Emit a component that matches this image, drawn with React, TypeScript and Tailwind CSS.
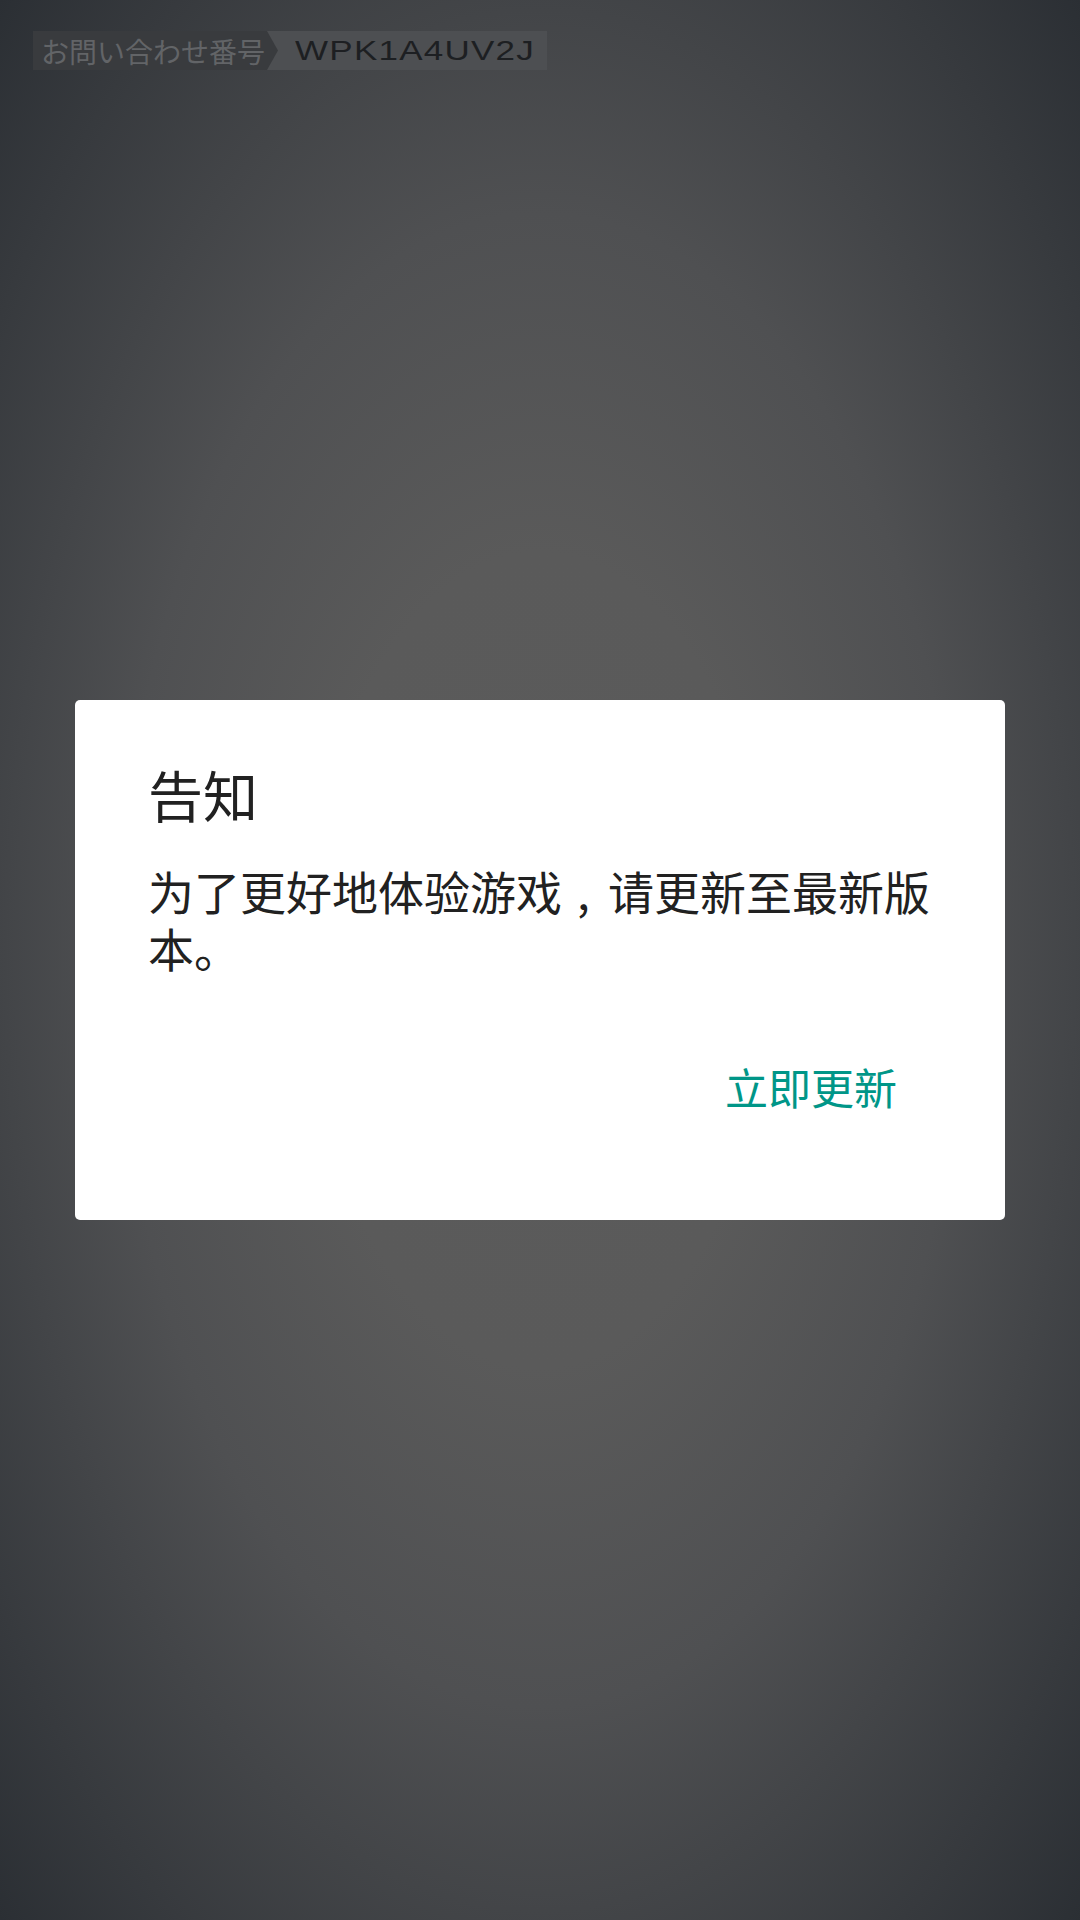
export default function App() {
	return (
		<div className="relative min-h-[1920px] w-[1080px] overflow-hidden bg-[radial-gradient(ellipse_at_center,#5b5b5b_0%,#5a5a5a_30%,#4f5052_55%,#2b2f34_100%)] font-['Noto_Sans_CJK_SC',sans-serif]">
			{/* inquiry number tag */}
			<div className="flex pl-[33px] pt-[31px]">
				<div className="relative z-10 flex h-[39px] w-[245px] items-center bg-[#393b3e] pl-[8px] [clip-path:polygon(0_0,calc(100%-11px)_0,100%_50%,calc(100%-11px)_100%,0_100%)]">
					<span className="font-['Noto_Sans_CJK_JP',sans-serif] text-[28px] leading-none text-[#626467]">
						お問い合わせ番号
					</span>
				</div>
				<div className="-ml-[11px] flex h-[39px] w-[280px] items-center bg-[#4d4f52] pl-[28px]">
					<span className="inline-block origin-left scale-x-[1.25] font-['Liberation_Sans',sans-serif] text-[28px] leading-none tracking-[1px] text-[#1d1f22]">
						WPK1A4UV2J
					</span>
				</div>
			</div>

			{/* notice dialog */}
			<div className="absolute inset-0 flex items-center justify-center">
				<div className="flex h-[520px] w-[930px] flex-col rounded-[5px] bg-white pl-[73px] pr-[60px] pt-[60px]">
					<h2 className="text-[55px] font-normal leading-[66px] text-[#212121]">告知</h2>
					<p className="mt-[36px] text-[46px] leading-[57px] text-[#212121]">
						为了更好地体验游戏<span className="inline-block w-[46px] pl-[15px]">,</span>请更新至最新版
						<br />
						本。
					</p>
					<div className="mt-[85px] flex justify-end pr-[48px]">
						<button type="button" className="text-[43px] leading-[50px] text-[#009688]">
							立即更新
						</button>
					</div>
				</div>
			</div>
		</div>
	);
}
